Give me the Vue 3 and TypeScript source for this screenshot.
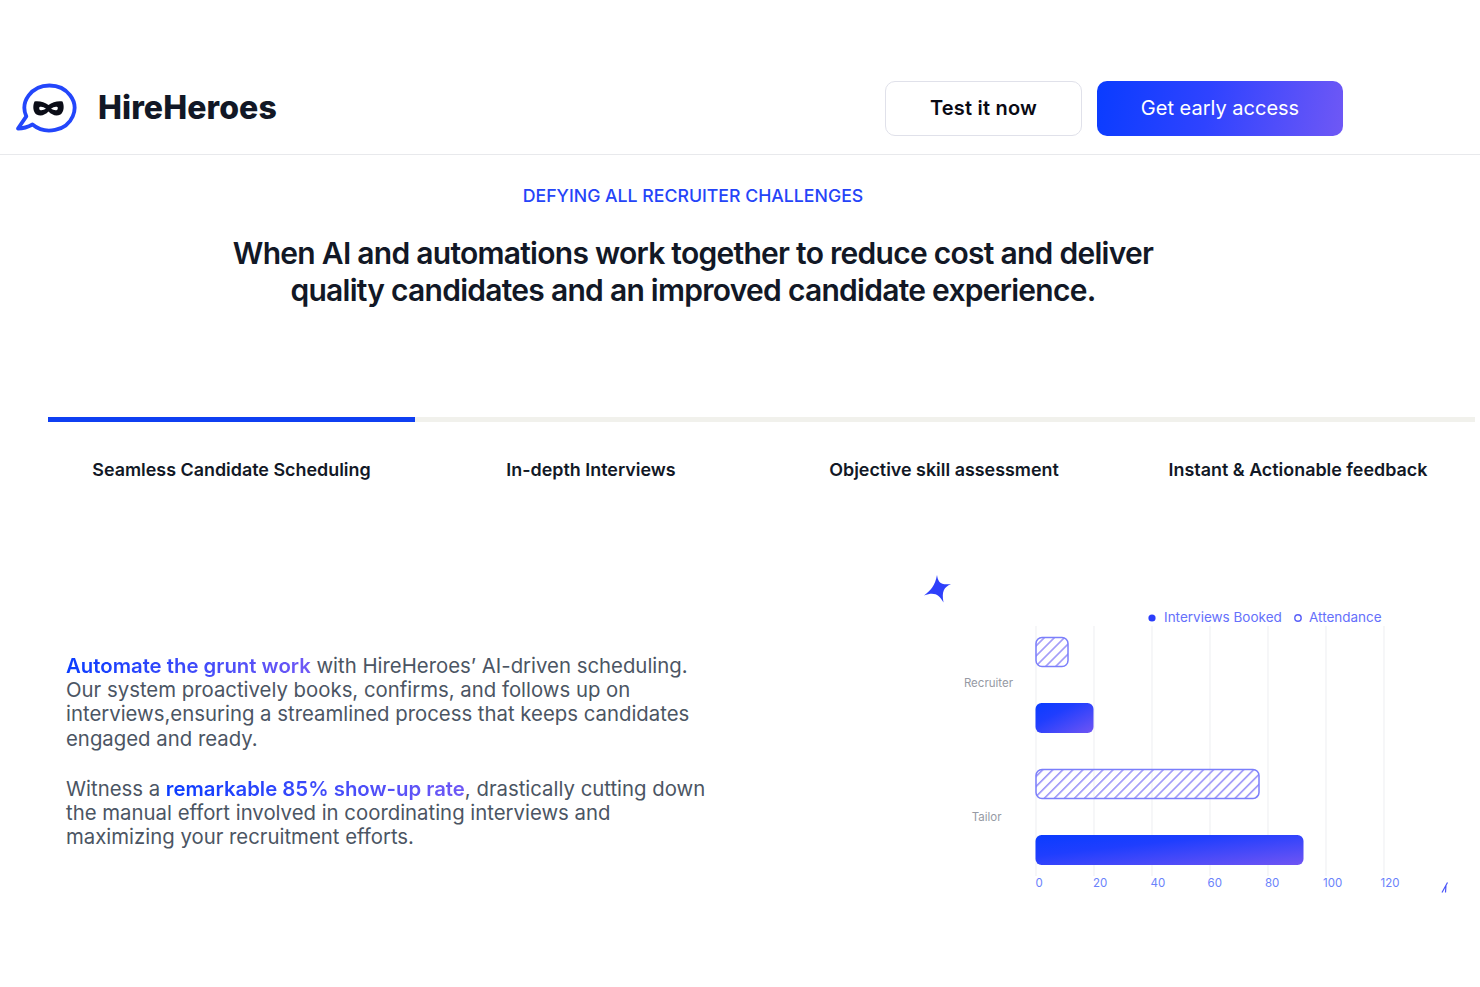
<template>
  <div class="page">
    <header class="topbar">
      <div class="brand">
        <svg class="logo" width="64" height="52" viewBox="0 0 64 52" fill="none">
          <path d="M3 45.5 L11.3 33.4 A25 22.5 0 1 1 17.5 41.5 C13 44 8 45.5 3 45.5 Z" stroke="#2346fb" stroke-width="3.8" stroke-linejoin="round" />
          <path fill-rule="evenodd" d="M19.5 18.5 C24 17.5 30 19.5 33.5 22 C37 19.5 43 17.5 47.5 18.5 C49.5 23 49 29 45.5 31.5 C41 33.5 37 32 33.5 28.5 C30 32 26 33.5 21.5 31.5 C18 29 17.5 23 19.5 18.5 Z M24.5 24 C26.5 23.2 29 24.2 31 25.8 C29 27 26.5 27.6 25 27 C24.2 26.4 24 25 24.5 24 Z M42.5 24 C40.5 23.2 38 24.2 36 25.8 C38 27 40.5 27.6 42 27 C42.8 26.4 43 25 42.5 24 Z" fill="#0b0d17" />
        </svg>
        <span class="brand-name">HireHeroes</span>
      </div>
      <div class="actions">
        <button class="btn btn-light">Test it now</button>
        <button class="btn btn-primary">Get early access</button>
      </div>
    </header>

    <section class="intro">
      <p class="eyebrow">DEFYING ALL RECRUITER CHALLENGES</p>
      <h1 class="headline">When AI and automations work together to reduce cost and deliver<br />quality candidates and an improved candidate experience.</h1>
    </section>

    <nav class="tabs">
      <div v-for="(t, i) in tabs" :key="t" class="tab" :class="{ active: i === 0 }">{{ t }}</div>
    </nav>

    <section class="panel">
      <div class="copy">
        <p><span class="grad">Automate the grunt work</span> with HireHeroes’ AI-driven scheduling.<br />Our system proactively books, confirms, and follows up on<br />interviews,ensuring a streamlined process that keeps candidates<br />engaged and ready.</p>
        <p>Witness a <span class="grad">remarkable 85% show-up rate</span>, drastically cutting down<br />the manual effort involved in coordinating interviews and<br />maximizing your recruitment efforts.</p>
      </div>

      <svg class="chart" width="560" height="340" viewBox="0 0 560 340">
        <defs>
          <linearGradient id="barA" x1="0" y1="0" x2="1" y2="1">
            <stop offset="0" stop-color="#0a3cff" />
            <stop offset="0.35" stop-color="#1f3efe" />
            <stop offset="1" stop-color="#7055f3" />
          </linearGradient>
          <pattern id="hatch" width="7.1" height="7.1" patternUnits="userSpaceOnUse" patternTransform="rotate(45)">
            <rect width="1.6" height="7.1" fill="#9d96f8" />
          </pattern>
        </defs>

        <line v-for="x in gridX" :key="x" :x1="x" :x2="x" y1="46" y2="296" stroke="#f0f1f4" stroke-width="1.2" />

        <g class="legend">
          <circle cx="252" cy="38" r="3.6" fill="#2a3dfb" />
          <text x="264" y="42">Interviews Booked</text>
          <circle cx="398" cy="38" r="3.2" fill="#fff" stroke="#5a61f8" stroke-width="1.4" />
          <text x="409" y="42">Attendance</text>
        </g>

        <path d="M37 -5 C38 2 40.5 5.5 51 4 C44 7.5 41.5 11 43.5 22.5 C39 15 35 11.5 24 15.5 C31 10 35 6 37 -5 Z" fill="#2e40fb" />

        <rect x="136" y="57.5" width="32" height="29" rx="6" fill="url(#hatch)" stroke="#7b7ffb" stroke-width="1.5" />
        <rect x="135.5" y="123" width="58" height="30" rx="6" fill="url(#barA)" />
        <rect x="136" y="189.5" width="223" height="29" rx="6" fill="url(#hatch)" stroke="#7b7ffb" stroke-width="1.5" />
        <rect x="135.5" y="255" width="268" height="30" rx="6" fill="url(#barA)" />

        <text class="cat" x="113" y="107" text-anchor="end">Recruiter</text>
        <text class="cat" x="101.5" y="241" text-anchor="end">Tailor</text>

        <text v-for="t in ticks" :key="t.label" class="tick" :x="t.x" y="307">{{ t.label }}</text>

        <path d="M542 312.5 L547.5 302.5 M546 305 L545.5 312.5" stroke="#4a55f8" stroke-width="1.2" fill="none" />
      </svg>
    </section>
  </div>
</template>

<script setup lang="ts">
const tabs: string[] = [
  'Seamless Candidate Scheduling',
  'In-depth Interviews',
  'Objective skill assessment',
  'Instant & Actionable feedback',
]
const gridX: number[] = [136, 194, 252, 310, 368, 426, 484]
const ticks = [
  { label: '0', x: 135.5 },
  { label: '20', x: 193 },
  { label: '40', x: 250.5 },
  { label: '60', x: 307.5 },
  { label: '80', x: 365 },
  { label: '100', x: 423 },
  { label: '120', x: 480.5 },
]
</script>

<style>
body {
  background: #fff;
}
</style>

<style scoped>
.page {
  width: 1480px;
  height: 987px;
  overflow: hidden;
  font-family: Inter, "Liberation Sans", sans-serif;
  background: #fff;
}
.topbar {
  box-sizing: border-box;
  height: 155px;
  border-bottom: 1px solid #e8e9ec;
  display: flex;
  align-items: flex-end;
  justify-content: space-between;
  padding: 0 137px 18px 15px;
}
.brand {
  display: flex;
  align-items: center;
  gap: 19px;
  margin-bottom: 1px;
}
.logo {
  display: block;
}
.brand-name {
  font-weight: 800;
  font-size: 32px;
  letter-spacing: 0.1px;
  line-height: 48px;
  padding-bottom: 3px;
  color: #121826;
}
.actions {
  display: flex;
  gap: 15px;
}
.btn {
  height: 55px;
  border-radius: 10px;
  font-family: inherit;
  font-size: 20px;
  padding-bottom: 2px;
  cursor: pointer;
}
.btn-light {
  width: 197px;
  background: #fff;
  border: 1px solid #e0e1ea;
  color: #0a0a14;
  font-weight: 600;
  letter-spacing: 0.2px;
}
.btn-primary {
  width: 246px;
  border: 0;
  color: #fff;
  font-weight: 400;
  background: linear-gradient(100deg, #0a3cff 0%, #2f43ff 45%, #6f58f5 100%);
}
.intro {
  width: 1386px;
  text-align: center;
}
.eyebrow {
  margin: 31px 0 0;
  font-size: 17.7px;
  line-height: 20px;
  font-weight: 500;
  color: #2544f8;
}
.headline {
  margin: 29px 0 0;
  font-size: 30px;
  line-height: 37px;
  font-weight: 600;
  letter-spacing: -0.73px;
  color: #121826;
}
.tabs {
  display: grid;
  grid-template-columns: 367px 352px 354px 354px;
  margin: 108px 0 0 48px;
}
.tab {
  height: 52px;
  padding-top: 37px;
  border-top: 5px solid #f1f1ec;
  text-align: center;
  font-size: 17.9px;
  line-height: 22px;
  font-weight: 600;
  color: #121826;
}
.tab.active {
  border-top-color: #0f3ff2;
}
.panel {
  display: flex;
  justify-content: space-between;
  padding-left: 66px;
  margin-top: 69px;
}
.copy {
  padding-top: 74px;
  font-size: 20.35px;
  line-height: 24.2px;
  color: #4b5563;
}
.copy p {
  margin: 0 0 26px;
}
.grad {
  font-weight: 600;
  background: linear-gradient(90deg, #0a3cff, #6f58f5);
  -webkit-background-clip: text;
  background-clip: text;
  color: transparent;
}
.chart {
  display: block;
  margin-right: 20px;
  overflow: visible;
  flex-shrink: 0;
}
.legend text {
  font-size: 13.5px;
  fill: #6570fb;
}
.cat {
  font-size: 11.5px;
  fill: #969aa4;
}
.tick {
  font-size: 11.5px;
  fill: #6a82fb;
}
</style>
